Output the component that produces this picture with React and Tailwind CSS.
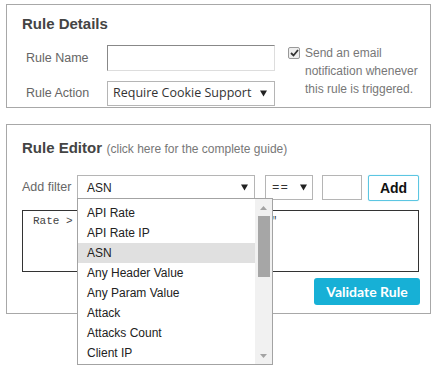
import React from "react";

const filterOptions = [
  "API Rate",
  "API Rate IP",
  "ASN",
  "Any Header Value",
  "Any Param Value",
  "Attack",
  "Attacks Count",
  "Client IP",
];

function Caret({ className = "" }) {
  return (
    <svg width="7" height="7" viewBox="0 0 7 7" className={className}>
      <path d="M0 0.5 H7 L3.5 6.5 Z" fill="#222" />
    </svg>
  );
}

function FilterDropdown() {
  return (
    <div className="absolute left-[77px] top-[198px] w-[196px] h-[167px] border border-[#a3a3a3] bg-white flex">
      <ul className="flex-1 pt-[4px] font-['Liberation_Sans',sans-serif] text-[12px] text-[#222]">
        {filterOptions.map((option) => (
          <li
            key={option}
            className={`h-[20px] leading-[20px] pl-[9px] ${option === "ASN" ? "bg-[#e0e0e0]" : ""}`}
          >
            {option}
          </li>
        ))}
      </ul>
      <div className="w-[17px] bg-[#f1f1f1] flex flex-col items-center">
        <div className="h-[17px] flex items-center justify-center">
          <svg width="7" height="4" viewBox="0 0 7 4">
            <path d="M0 4 L3.5 0 L7 4 Z" fill="#a3a3a3" />
          </svg>
        </div>
        <div className="w-[12px] h-[61px] bg-[#a6a6a6]" />
        <div className="flex-1" />
        <div className="h-[17px] flex items-center justify-center">
          <svg width="7" height="4" viewBox="0 0 7 4">
            <path d="M0 0 L7 0 L3.5 4 Z" fill="#a3a3a3" />
          </svg>
        </div>
      </div>
    </div>
  );
}

export default function App() {
  return (
    <div className="relative w-[435px] h-[380px] overflow-hidden bg-white font-['Liberation_Sans',sans-serif] pt-[4px]">
      <section className="ml-[6px] w-[425px] h-[104px] border border-[#a8a8a8] pl-[15px] pt-[9px]">
        <h2 className="text-[15px] leading-[20px] font-bold text-[#444]">Rule Details</h2>
        <div className="mt-[11px] flex items-start">
          <div className="flex flex-col">
            <div className="flex items-center h-[26px]">
              <label className="w-[85px] pl-[4px] text-[12.5px] text-[#666]">Rule Name</label>
              <input
                type="text"
                className="w-[168px] h-[26px] bg-white border border-t-[#888] border-l-[#888] border-r-[#ddd] border-b-[#ddd] outline-none"
              />
            </div>
            <div className="flex items-center h-[25px] mt-[10px]">
              <label className="w-[85px] pl-[4px] text-[12.5px] text-[#666]">Rule Action</label>
              <div className="w-[168px] h-[25px] border border-[#b5b5b5] flex items-center pl-[5px] pr-[7px] font-['Open_Sans',sans-serif] text-[12.5px] text-[#333]">
                <span className="flex-1 whitespace-nowrap">Require Cookie Support</span>
                <Caret />
              </div>
            </div>
          </div>
          <div className="ml-[13px] -mt-[1px] flex items-start">
            <span className="mt-[3px] w-[12px] h-[12px] border border-[#999] rounded-[2px] bg-[#eee] flex items-center justify-center">
              <svg width="9" height="8" viewBox="0 0 9 8">
                <path d="M1 4 L3.5 6.5 L8 1" stroke="#333" strokeWidth="1.8" fill="none" />
              </svg>
            </span>
            <p className="ml-[5px] text-[12px] leading-[18px] text-[#777]">
              Send an email
              <br />
              notification whenever
              <br />
              this rule is triggered.
            </p>
          </div>
        </div>
      </section>

      <section className="ml-[6px] mt-[16px] w-[425px] h-[190px] border border-[#a8a8a8] pl-[15px] pt-[13px]">
        <h2 className="leading-[20px] text-[#444]">
          <span className="text-[15px] font-bold">Rule Editor</span>{" "}
          <span className="text-[12px] text-[#777]">(click here for the complete guide)</span>
        </h2>

        <div className="mt-[16px] flex items-start">
          <label className="w-[55px] h-[25px] flex items-center text-[12.5px] text-[#666]">Add filter</label>
          <div className="w-[178px] h-[25px] border border-[#b5b5b5] flex items-center pl-[9px] pr-[6px] text-[12px] text-[#222]">
            <span className="flex-1">ASN</span>
            <Caret />
          </div>
          <div className="ml-[10px] w-[48px] h-[25px] border border-[#b5b5b5] flex items-center pl-[6px] pr-[5px] font-['Open_Sans',sans-serif] text-[13px] text-[#333]">
            <span className="flex-1 tracking-[1px]">==</span>
            <Caret />
          </div>
          <input
            type="text"
            className="ml-[9px] w-[40px] h-[25px] border border-[#b5b5b5] bg-white outline-none"
          />
          <button className="ml-[6px] w-[51px] h-[26px] rounded-[2px] border border-[#5cc6e2] shadow-[0_0_1px_#7fd4ea] bg-white text-[14px] font-bold text-[#111] leading-none">
            Add
          </button>
        </div>

        <div className="mt-[9px] w-[397px] h-[62px] border border-[#333] pl-[10px] pt-[2px] font-['Liberation_Mono',monospace] text-[11px] text-[#444] whitespace-pre">
          {'Rate > 10000 && Any Header Value == "'}
        </div>

        <div className="mt-[6px] pr-[10px] flex justify-end">
          <button className="w-[106px] h-[27px] rounded-[3px] bg-[#17b0d6] text-white font-['Lato',sans-serif] font-bold text-[14px]">
            Validate Rule
          </button>
        </div>
      </section>

      <FilterDropdown />
    </div>
  );
}
